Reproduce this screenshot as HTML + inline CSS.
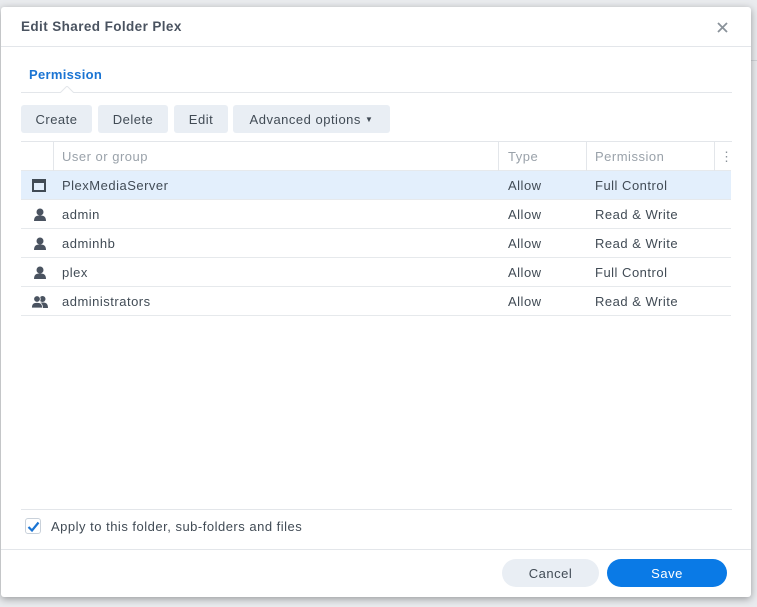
<!DOCTYPE html>
<html><head><meta charset="utf-8"><style>
*{box-sizing:border-box;margin:0;padding:0}
body{width:757px;height:607px;background:#e9ebee;font-family:"Liberation Sans",sans-serif;position:relative;overflow:hidden;color:#414b55;font-size:13px;letter-spacing:0.5px}
.dlg{position:absolute;left:1px;top:7px;width:750px;height:590px;background:#fff;border-radius:3px;box-shadow:0 2px 8px rgba(0,0,0,.35)}
.abs{position:absolute}
.btn{position:absolute;top:98px;height:28px;background:#e9eef4;border-radius:3px;line-height:30px;text-align:center;font-size:13px;color:#414b55}
.hr{position:absolute;height:1px;background:#e3e6ea}
.row{position:absolute;left:20px;width:710px;height:29px;border-bottom:1px solid #e6e9ec;line-height:30px}
.row span{position:absolute}
.vl{position:absolute;top:135px;width:1px;height:29px;background:#e3e6ea}
</style></head><body>
<div class="abs" style="right:0;top:60px;width:6px;height:1px;background:#d0d4d8"></div>
<div class="dlg">
<div class="abs" style="left:20px;top:12px;font-weight:bold;font-size:13.5px;color:#4a5360;letter-spacing:0.4px">Edit Shared Folder Plex</div>
<svg class="abs" style="left:716px;top:15px" width="11" height="11"><path d="M1 1L10 10M10 1L1 10" stroke="#8a929a" stroke-width="1.8"/></svg>
<div class="hr" style="left:0;top:39px;width:750px"></div>
<div class="abs" style="left:28px;top:60px;font-weight:bold;color:#1a74d3;font-size:13px;letter-spacing:0.3px">Permission</div>
<div class="hr" style="left:20px;top:85px;width:711px"></div>
<svg class="abs" style="left:59px;top:79px" width="14" height="7"><path d="M0 7L7 0L14 7" fill="#fff" stroke="#e3e6ea"/></svg>
<div class="btn" style="left:20px;width:71px">Create</div>
<div class="btn" style="left:97px;width:70px">Delete</div>
<div class="btn" style="left:173px;width:54px">Edit</div>
<div class="btn" style="left:232px;width:157px">Advanced options <span style="font-size:8px;vertical-align:2px">▼</span></div>
<div class="hr" style="left:20px;top:134px;width:711px"></div>
<div class="row" style="top:135px;color:#9aa2aa">
<span style="left:41px">User or group</span><span style="left:487px">Type</span><span style="left:574px">Permission</span><span style="left:699px;color:#8a929a">⋮</span></div>
<div class="vl" style="left:52px"></div><div class="vl" style="left:497px"></div><div class="vl" style="left:585px"></div><div class="vl" style="left:713px"></div>
<div class="row" style="top:164px;background:#e3effc">
<svg class="abs" style="left:11px;top:8px" width="14" height="13"><rect x="1" y="1" width="12" height="11" fill="none" stroke="#414b55" stroke-width="2"/><rect x="1" y="1" width="12" height="3" fill="#414b55"/></svg>
<span style="left:41px">PlexMediaServer</span><span style="left:487px">Allow</span><span style="left:574px">Full Control</span></div>
<div class="row" style="top:193px"><svg class="abs" style="left:12px;top:8px" width="14" height="13"><circle cx="7" cy="4" r="3.5" fill="#4a5360"/><path d="M1 13Q1 7 7 7.5Q13 7 13 13Z" fill="#4a5360"/></svg><span style="left:41px">admin</span><span style="left:487px">Allow</span><span style="left:574px">Read &amp; Write</span></div>
<div class="row" style="top:222px"><svg class="abs" style="left:12px;top:8px" width="14" height="13"><circle cx="7" cy="4" r="3.5" fill="#4a5360"/><path d="M1 13Q1 7 7 7.5Q13 7 13 13Z" fill="#4a5360"/></svg><span style="left:41px">adminhb</span><span style="left:487px">Allow</span><span style="left:574px">Read &amp; Write</span></div>
<div class="row" style="top:251px"><svg class="abs" style="left:12px;top:8px" width="14" height="13"><circle cx="7" cy="4" r="3.5" fill="#4a5360"/><path d="M1 13Q1 7 7 7.5Q13 7 13 13Z" fill="#4a5360"/></svg><span style="left:41px">plex</span><span style="left:487px">Allow</span><span style="left:574px">Full Control</span></div>
<div class="row" style="top:280px"><svg class="abs" style="left:10px;top:8px" width="18" height="13"><circle cx="11.5" cy="4" r="3" fill="#4a5360"/><path d="M7 13Q7 7 11.5 7.5Q17 7 17 13Z" fill="#4a5360"/><circle cx="6" cy="4" r="3.3" fill="#4a5360" stroke="#fff" stroke-width=".8"/><path d="M0.5 13Q0.5 7 6 7.5Q11.5 7 11.5 13Z" fill="#4a5360" stroke="#fff" stroke-width=".8"/></svg><span style="left:41px">administrators</span><span style="left:487px">Allow</span><span style="left:574px">Read &amp; Write</span></div>
<div class="hr" style="left:20px;top:502px;width:711px"></div>
<div class="abs" style="left:24px;top:511px;width:16px;height:16px;border:1px solid #c9d1da;border-radius:3px"></div>
<svg class="abs" style="left:25px;top:512px" width="15" height="15"><path d="M2.5 8L6 11.5L12.5 3.5" fill="none" stroke="#1a74d3" stroke-width="2.2"/></svg>
<div class="abs" style="left:50px;top:512px;color:#414b55">Apply to this folder, sub-folders and files</div>
<div class="hr" style="left:0;top:542px;width:750px"></div>
<div class="abs" style="left:501px;top:552px;width:97px;height:28px;border-radius:14px;background:#e9eef4;text-align:center;line-height:30px;color:#414b55">Cancel</div>
<div class="abs" style="left:606px;top:552px;width:120px;height:28px;border-radius:14px;background:#0a7ae6;text-align:center;line-height:30px;color:#fff">Save</div>
</div>
</body></html>
